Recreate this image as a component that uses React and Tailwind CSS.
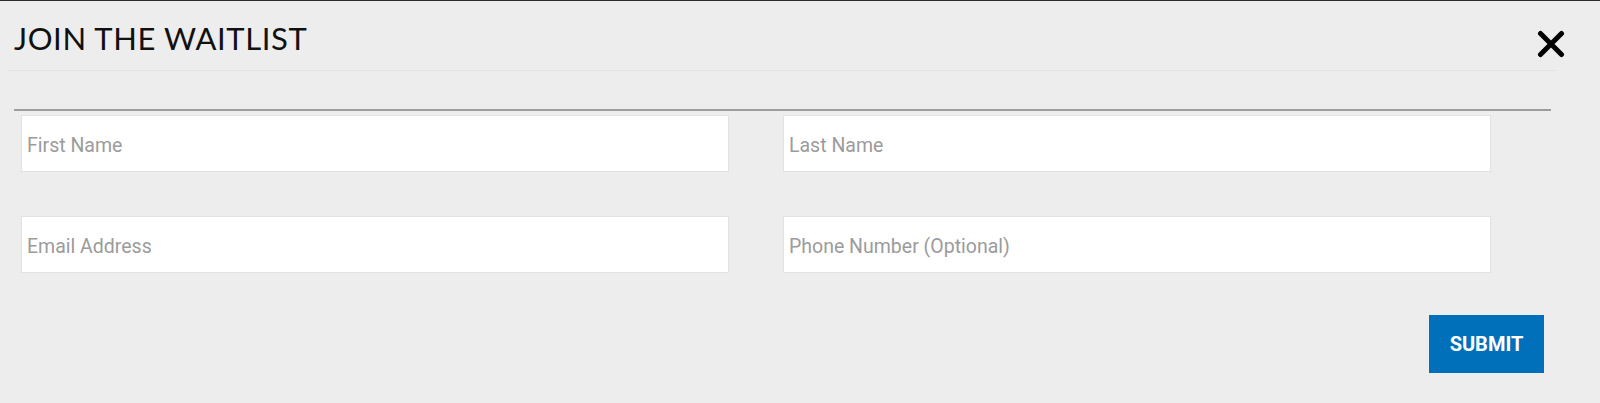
import React from "react";

const fields = [
  "First Name",
  "Last Name",
  "Email Address",
  "Phone Number (Optional)",
];

const App = () => {
  return (
    <div className="relative min-h-[403px] bg-[#ededed] border-t border-[#2a2a2a]">
      {/* Header */}
      <div className="mx-[7px] w-[1551px] h-[70px] border-b border-[#e4e4e4] pl-[7px] pt-[19px]">
        <h2
          className="text-[31px] leading-[36px] font-normal text-[#111] tracking-[0.6px]"
          style={{ fontFamily: "Lato, 'Open Sans', sans-serif" }}
        >
          JOIN THE WAITLIST
        </h2>
      </div>
      <button
        className="absolute left-[1537px] top-[29px] w-[28px] h-[28px] flex items-center justify-center"
        aria-label="Close"
      >
        <svg width="28" height="28" viewBox="0 0 28 28">
          <path d="M3.5 3.5 L24.5 24.5 M24.5 3.5 L3.5 24.5" stroke="#000" strokeWidth="5" strokeLinecap="round" />
        </svg>
      </button>

      {/* Divider */}
      <div className="ml-[14px] mt-[38px] w-[1537px] border-t-2 border-[#9c9c9c]" />

      {/* Form */}
      <form
        className="ml-[21px] mt-[4px] w-[1470px] grid grid-cols-2 gap-x-[54px] gap-y-[44px]"
        style={{ fontFamily: "Roboto, 'Liberation Sans', sans-serif" }}
        onSubmit={(e) => e.preventDefault()}
      >
        {fields.map((f) => (
          <input
            key={f}
            placeholder={f}
            className="h-[57px] w-full bg-white border border-[#e2e2e2] px-[5px] pt-[4px] text-[19.5px] text-[#333] placeholder:text-[#9b9b9b] outline-none"
          />
        ))}
      </form>

      <div className="ml-[1429px] mt-[42px]">
        <button
          className="w-[115px] h-[58px] bg-[#0070bb] text-white text-[20px] font-bold uppercase"
          style={{ fontFamily: "Roboto, 'Liberation Sans', sans-serif" }}
        >
          Submit
        </button>
      </div>
    </div>
  );
};

export default App;
